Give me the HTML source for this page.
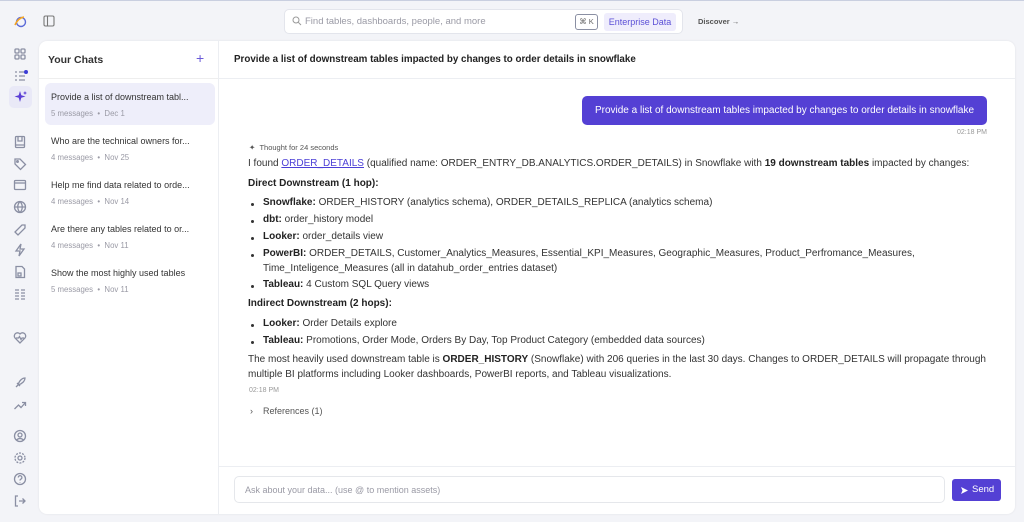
<!DOCTYPE html>
<html><head><meta charset="utf-8"><style>
*{box-sizing:border-box;margin:0;padding:0}
body{width:1024px;height:522px;overflow:hidden;background:#f3f4f8;font-family:"Liberation Sans",sans-serif;color:#374151;position:relative}
.abs{position:absolute}
.ic{position:absolute;left:13px;width:14px;height:14px}
.ic svg{width:14px;height:14px;stroke:#8a8fa3;fill:none;stroke-width:1.3}
.panel{left:39px;top:41px;width:976px;height:473px;background:#fff;border-radius:8px;box-shadow:0 0 2px rgba(0,0,0,.08)}
.chat{position:absolute;left:6px;width:170px;height:42px;border-radius:6px;padding:9px 6px}
.chat .t{font-size:9px;color:#333;white-space:nowrap}
.chat .m{font-size:7.8px;color:#9a9aa5;margin-top:7px}
.msg{position:absolute;left:248px;font-size:10px;color:#333;white-space:nowrap}
.msg b{color:#222}
.li{left:263px}
.dot{position:absolute;left:-12px;top:6px;width:3px;height:3px;border-radius:50%;background:#333}
</style></head><body>
<div class="abs" style="left:0;top:0;width:1024px;height:1px;background:#c9cfe0"></div>
<svg class="abs" style="left:13px;top:15px" width="14" height="14" viewBox="0 0 14 14"><circle cx="8" cy="7" r="4.5" fill="none" stroke="#5b6bd8" stroke-width="1.4"/><path d="M2 10 Q5 3 11 2" stroke="#f5a623" stroke-width="1.6" fill="none"/></svg>
<svg class="abs" style="left:43px;top:15px" width="12" height="12" viewBox="0 0 12 12"><rect x="1" y="1" width="10" height="10" rx="1.5" fill="none" stroke="#777" stroke-width="1.1"/><line x1="4.5" y1="1" x2="4.5" y2="11" stroke="#777" stroke-width="1.1"/></svg>
<div class="abs" style="left:284px;top:9px;width:399px;height:25px;background:#fff;border:1px solid #e3e5ec;border-radius:5px"></div>
<svg class="abs" style="left:292px;top:16px" width="10" height="10" viewBox="0 0 10 10"><circle cx="4" cy="4" r="3" fill="none" stroke="#999" stroke-width="1"/><line x1="6.3" y1="6.3" x2="9" y2="9" stroke="#999"/></svg>
<div class="abs" style="left:305px;top:16px;font-size:9.5px;color:#9a9aa5">Find tables, dashboards, people, and more</div>
<div class="abs" style="left:575px;top:14px;width:23px;height:16px;border:1px solid #8a8fa3;border-radius:3px;font-size:7.5px;color:#666;text-align:center;line-height:14px">⌘ K</div>
<div class="abs" style="left:604px;top:13px;width:72px;height:18px;background:#efedfc;border-radius:3px;font-size:9px;color:#5b4fd6;text-align:center;line-height:18px">Enterprise Data</div>
<div class="abs" style="left:698px;top:17px;font-size:7.5px;color:#555;font-weight:bold">Discover →</div>
<div class="ic" style="top:47px"><svg viewBox="0 0 14 14"><rect x="2" y="2" width="4" height="4" rx="1"/><rect x="8" y="2" width="4" height="4" rx="1"/><rect x="2" y="8" width="4" height="4" rx="1"/><rect x="8" y="8" width="4" height="4" rx="1"/></svg></div>
<div class="ic" style="top:69px"><svg viewBox="0 0 14 14"><path d="M2 3h2M2 7h2M2 11h2M6 3h5M6 7h6M6 11h6"/></svg></div>
<div class="abs" style="left:24px;top:70px;width:4px;height:4px;border-radius:50%;background:#3b3bd6"></div>
<div class="abs" style="left:9px;top:86px;width:23px;height:22px;border-radius:5px;background:#e9e9f7"></div>
<svg class="abs" style="left:14px;top:90px" width="14" height="14" viewBox="0 0 14 14"><path d="M6 1 L7.3 5.2 L11.5 6.5 L7.3 7.8 L6 12 L4.7 7.8 L0.5 6.5 L4.7 5.2Z" fill="#5b3fd6"/><path d="M11 1l.6 1.4 1.4.6-1.4.6-.6 1.4-.6-1.4L9 3l1.4-.6z" fill="#5b3fd6"/></svg>
<div class="ic" style="top:135px"><svg viewBox="0 0 14 14"><rect x="2.5" y="1.5" width="9" height="11" rx="1"/><path d="M5 2v4h4V2M3 10h8"/></svg></div>
<div class="ic" style="top:157px"><svg viewBox="0 0 14 14"><path d="M2 2h5l5.5 5.5-5 5L2 7z"/><circle cx="4.5" cy="4.5" r=".8"/></svg></div>
<div class="ic" style="top:178px"><svg viewBox="0 0 14 14"><rect x="1.5" y="2.5" width="11" height="9" rx="1"/><path d="M1.5 5h11"/></svg></div>
<div class="ic" style="top:200px"><svg viewBox="0 0 14 14"><circle cx="7" cy="7" r="5.5"/><path d="M1.5 7h11M7 1.5c-3 3-3 8 0 11M7 1.5c3 3 3 8 0 11"/></svg></div>
<div class="ic" style="top:222px"><svg viewBox="0 0 14 14"><path d="M3 11l-1-1L9 3l3 0 0 3-7 7z"/></svg></div>
<div class="ic" style="top:243px"><svg viewBox="0 0 14 14"><path d="M8 1L3 8h4l-1 5 5-7H7z"/></svg></div>
<div class="ic" style="top:265px"><svg viewBox="0 0 14 14"><path d="M3 1.5h6l2.5 2.5v8.5H3z"/><rect x="5" y="8" width="3" height="3"/></svg></div>
<div class="ic" style="top:287px"><svg viewBox="0 0 14 14"><path d="M2 3h4M8 3h4M2 6h4M8 6h4M2 9h4M8 9h4M2 12h4M8 12h4"/></svg></div>
<div class="ic" style="top:331px"><svg viewBox="0 0 14 14"><path d="M7 12L2 7a3 3 0 015-4 3 3 0 015 4z"/><path d="M3 7h2.5l1-1.5 1.5 3 1-1.5h2"/></svg></div>
<div class="ic" style="top:376px"><svg viewBox="0 0 14 14"><path d="M3 11l2-2M5 9c1-4 4-7 7-7 0 3-3 6-7 7zM4 7l3 3"/></svg></div>
<div class="ic" style="top:398px"><svg viewBox="0 0 14 14"><path d="M1.5 11l4-4 2.5 2.5 4.5-5M9 4.5h3.5V8"/></svg></div>
<div class="ic" style="top:429px"><svg viewBox="0 0 14 14"><circle cx="7" cy="7" r="5.5"/><circle cx="7" cy="6" r="2"/><path d="M3.5 11c2-2 5-2 7 0"/></svg></div>
<div class="ic" style="top:451px"><svg viewBox="0 0 14 14"><circle cx="7" cy="7" r="2"/><circle cx="7" cy="7" r="5" stroke-dasharray="2 1.2"/></svg></div>
<div class="ic" style="top:472px"><svg viewBox="0 0 14 14"><circle cx="7" cy="7" r="5.5"/><path d="M5.3 5.5a1.8 1.8 0 113 1.3c-.8.5-1.3.8-1.3 1.7M7 10v.5"/></svg></div>
<div class="ic" style="top:494px"><svg viewBox="0 0 14 14"><path d="M5 2H2.5v10H5M6 7h6M9.5 4.5L12 7l-2.5 2.5"/></svg></div>

<div class="abs panel">
  <div class="abs" style="left:9px;top:13px;font-size:10.5px;font-weight:bold;color:#333">Your Chats</div>
  <div class="abs" style="left:157px;top:9px;font-size:14px;color:#6a5ad8">+</div>
  <div class="abs" style="left:0;top:37px;width:180px;height:1px;background:#eee"></div>
  <div class="abs" style="left:179px;top:0;width:1px;height:473px;background:#eceef2"></div>
  <div class="chat" style="top:42px;background:#eeeefa"><div class="t">Provide a list of downstream tabl...</div><div class="m">5 messages &nbsp;•&nbsp; Dec 1</div></div>
  <div class="chat" style="top:86px"><div class="t">Who are the technical owners for...</div><div class="m">4 messages &nbsp;•&nbsp; Nov 25</div></div>
  <div class="chat" style="top:130px"><div class="t">Help me find data related to orde...</div><div class="m">4 messages &nbsp;•&nbsp; Nov 14</div></div>
  <div class="chat" style="top:174px"><div class="t">Are there any tables related to or...</div><div class="m">4 messages &nbsp;•&nbsp; Nov 11</div></div>
  <div class="chat" style="top:218px"><div class="t">Show the most highly used tables</div><div class="m">5 messages &nbsp;•&nbsp; Nov 11</div></div>
  <div class="abs" style="left:195px;top:13px;font-size:9.8px;font-weight:bold;color:#222">Provide a list of downstream tables impacted by changes to order details in snowflake</div>
  <div class="abs" style="left:180px;top:37px;width:796px;height:1px;background:#eceef2"></div>
  <div class="abs" style="left:180px;top:425px;width:796px;height:1px;background:#eceef2"></div>
  <div class="abs" style="left:195px;top:435px;width:711px;height:27px;border:1px solid #e5e7eb;border-radius:5px;font-size:9px;color:#9a9aa5;padding:8px 10px">Ask about your data... (use @ to mention assets)</div>
  <div class="abs" style="left:913px;top:438px;width:49px;height:22px;background:#5440d4;border-radius:3px;color:#fff;font-size:9.5px;line-height:22px;padding-left:20px">Send</div>
  <svg class="abs" style="left:921px;top:445px" width="9" height="9" viewBox="0 0 9 9"><path d="M1 1l7 3.5-7 3.5 1.5-3.5z" fill="#fff"/></svg>
</div>

<div class="abs" style="left:582px;top:96px;width:405px;height:29px;background:#5440d4;border-radius:5px;color:#fff;font-size:10px;line-height:29px;text-align:center">Provide a list of downstream tables impacted by changes to order details in snowflake</div>
<div class="abs" style="left:957px;top:129px;font-size:7px;color:#999">02:18 PM</div>
<div class="abs" style="left:249px;top:143px;font-size:7.5px;color:#555">✦ &nbsp;Thought for 24 seconds</div>
<div class="msg" style="top:158px">I found <span style="color:#4b3fd6;text-decoration:underline">ORDER_DETAILS</span> (qualified name: ORDER_ENTRY_DB.ANALYTICS.ORDER_DETAILS) in Snowflake with <b>19 downstream tables</b> impacted by changes:</div>
<div class="msg" style="top:178px"><b>Direct Downstream (1 hop):</b></div>
<div class="msg li" style="top:197px"><span class="dot"></span><b>Snowflake:</b> ORDER_HISTORY (analytics schema), ORDER_DETAILS_REPLICA (analytics schema)</div>
<div class="msg li" style="top:214px"><span class="dot"></span><b>dbt:</b> order_history model</div>
<div class="msg li" style="top:231px"><span class="dot"></span><b>Looker:</b> order_details view</div>
<div class="msg li" style="top:248px"><span class="dot"></span><b>PowerBI:</b> ORDER_DETAILS, Customer_Analytics_Measures, Essential_KPI_Measures, Geographic_Measures, Product_Perfromance_Measures,</div>
<div class="msg li" style="top:263px">Time_Inteligence_Measures (all in datahub_order_entries dataset)</div>
<div class="msg li" style="top:279px"><span class="dot"></span><b>Tableau:</b> 4 Custom SQL Query views</div>
<div class="msg" style="top:298px"><b>Indirect Downstream (2 hops):</b></div>
<div class="msg li" style="top:318px"><span class="dot"></span><b>Looker:</b> Order Details explore</div>
<div class="msg li" style="top:335px"><span class="dot"></span><b>Tableau:</b> Promotions, Order Mode, Orders By Day, Top Product Category (embedded data sources)</div>
<div class="msg" style="top:354px">The most heavily used downstream table is <b>ORDER_HISTORY</b> (Snowflake) with 206 queries in the last 30 days. Changes to ORDER_DETAILS will propagate through</div>
<div class="msg" style="top:369px">multiple BI platforms including Looker dashboards, PowerBI reports, and Tableau visualizations.</div>
<div class="abs" style="left:249px;top:387px;font-size:7px;color:#999">02:18 PM</div>
<div class="abs" style="left:250px;top:406px;font-size:9px;color:#555">›&nbsp;&nbsp;&nbsp; References (1)</div>
</body></html>
